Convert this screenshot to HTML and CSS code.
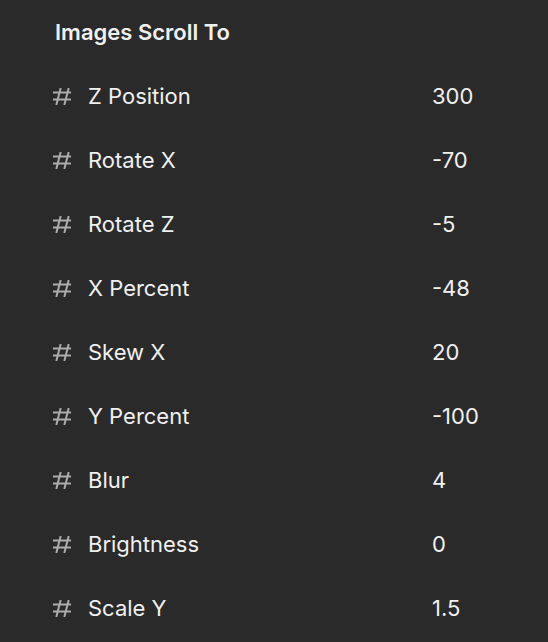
FILE: index.html
```html
<!DOCTYPE html>
<html>
<head>
<meta charset="utf-8">
<link rel="stylesheet" href="styles.css">
</head>
<body>
<div class="panel">
  <div class="title">Images Scroll To</div>
  <div class="row"><svg class="hash" viewBox="0 0 18 17" width="18" height="17"><path d="M7.7 0L3.3 17M15.7 0L11.3 17M0 4.5H18M0 11.5H18"/></svg><span class="label">Z Position</span><span class="value">300</span></div>
  <div class="row"><svg class="hash" viewBox="0 0 18 17" width="18" height="17"><path d="M7.7 0L3.3 17M15.7 0L11.3 17M0 4.5H18M0 11.5H18"/></svg><span class="label">Rotate X</span><span class="value">-70</span></div>
  <div class="row"><svg class="hash" viewBox="0 0 18 17" width="18" height="17"><path d="M7.7 0L3.3 17M15.7 0L11.3 17M0 4.5H18M0 11.5H18"/></svg><span class="label">Rotate Z</span><span class="value">-5</span></div>
  <div class="row"><svg class="hash" viewBox="0 0 18 17" width="18" height="17"><path d="M7.7 0L3.3 17M15.7 0L11.3 17M0 4.5H18M0 11.5H18"/></svg><span class="label">X Percent</span><span class="value">-48</span></div>
  <div class="row"><svg class="hash" viewBox="0 0 18 17" width="18" height="17"><path d="M7.7 0L3.3 17M15.7 0L11.3 17M0 4.5H18M0 11.5H18"/></svg><span class="label">Skew X</span><span class="value">20</span></div>
  <div class="row"><svg class="hash" viewBox="0 0 18 17" width="18" height="17"><path d="M7.7 0L3.3 17M15.7 0L11.3 17M0 4.5H18M0 11.5H18"/></svg><span class="label">Y Percent</span><span class="value">-100</span></div>
  <div class="row"><svg class="hash" viewBox="0 0 18 17" width="18" height="17"><path d="M7.7 0L3.3 17M15.7 0L11.3 17M0 4.5H18M0 11.5H18"/></svg><span class="label">Blur</span><span class="value">4</span></div>
  <div class="row"><svg class="hash" viewBox="0 0 18 17" width="18" height="17"><path d="M7.7 0L3.3 17M15.7 0L11.3 17M0 4.5H18M0 11.5H18"/></svg><span class="label">Brightness</span><span class="value">0</span></div>
  <div class="row"><svg class="hash" viewBox="0 0 18 17" width="18" height="17"><path d="M7.7 0L3.3 17M15.7 0L11.3 17M0 4.5H18M0 11.5H18"/></svg><span class="label">Scale Y</span><span class="value">1.5</span></div>
</div>
</body>
</html>
```

FILE: styles.css
```css
html, body {
  margin: 0;
  background: #2a2a2a;
}
.panel {
  font-family: Inter, "Noto Sans", sans-serif;
  color: #f0f0f0;
  display: flex;
  flex-direction: column;
}
.title {
  height: 64px;
  display: flex;
  align-items: center;
  padding-left: 55px;
  font-size: 22px;
  font-weight: 600;
}
.row {
  height: 64px;
  display: flex;
  align-items: center;
  font-size: 22px;
}
.hash {
  flex: none;
  margin-left: 53px;
  margin-right: 17px;
  stroke: #ababab;
  stroke-width: 2;
  fill: none;
}
.label {
  width: 344px;
}
```
